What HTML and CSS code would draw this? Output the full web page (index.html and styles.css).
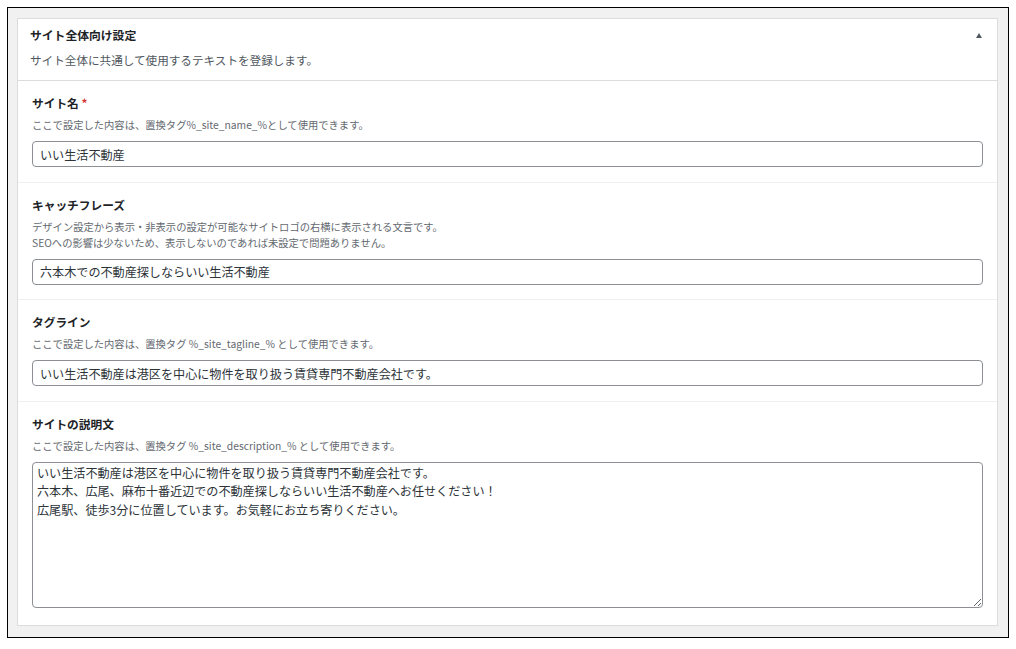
FILE: index.html
```html
<!DOCTYPE html>
<html lang="ja">
<head>
  <meta charset="UTF-8">
  <title>サイト全体向け設定</title>
  <link rel="stylesheet" href="styles.css">
</head>
<body>
  <div class="frame">
    <div class="postbox">
      <div class="postbox-header">
        <div class="title-row">
          <h2>サイト全体向け設定</h2>
          <span class="toggle"></span>
        </div>
        <p class="lead">サイト全体に共通して使用するテキストを登録します。</p>
      </div>

      <div class="field">
        <label class="field-label">サイト名 <span class="required">*</span></label>
        <p class="field-desc">ここで設定した内容は、置換タグ%_site_name_%として使用できます。</p>
        <input class="text-input" type="text" value="いい生活不動産">
      </div>

      <div class="field">
        <label class="field-label">キャッチフレーズ</label>
        <p class="field-desc">デザイン設定から表示・非表示の設定が可能なサイトロゴの右横に表示される文言です。<br>SEOへの影響は少ないため、表示しないのであれば未設定で問題ありません。</p>
        <input class="text-input" type="text" value="六本木での不動産探しならいい生活不動産">
      </div>

      <div class="field">
        <label class="field-label">タグライン</label>
        <p class="field-desc">ここで設定した内容は、置換タグ %_site_tagline_% として使用できます。</p>
        <input class="text-input" type="text" value="いい生活不動産は港区を中心に物件を取り扱う賃貸専門不動産会社です。">
      </div>

      <div class="field last">
        <label class="field-label">サイトの説明文</label>
        <p class="field-desc">ここで設定した内容は、置換タグ %_site_description_% として使用できます。</p>
        <textarea class="text-area">いい生活不動産は港区を中心に物件を取り扱う賃貸専門不動産会社です。
六本木、広尾、麻布十番近辺での不動産探しならいい生活不動産へお任せください！
広尾駅、徒歩3分に位置しています。お気軽にお立ち寄りください。</textarea>
      </div>
    </div>
  </div>
</body>
</html>
```

FILE: styles.css
```css
body {
  margin: 0;
  background: #fff;
  font-family: "Segoe UI", "Noto Sans CJK JP", "Noto Sans", sans-serif;
  color: #1d2327;
}

.frame {
  margin: 7px;
  border: 1px solid #000;
  background-color: #f1f1f1;
  padding: 10px 10px 10px 9px;
  box-sizing: border-box;
  height: 631px;
}

.postbox {
  background: #fff;
  border: 1px solid #dcdcde;
}

.postbox-header {
  padding: 8px 15px 12px 12px;
  border-bottom: 1px solid #dcdcde;
}

.title-row {
  display: flex;
  justify-content: space-between;
  align-items: center;
}

h2 {
  margin: 0;
  font-size: 11.8px;
  line-height: 16px;
  font-weight: bold;
}

.toggle {
  width: 0;
  height: 0;
  border-left: 3.5px solid transparent;
  border-right: 3.5px solid transparent;
  border-bottom: 5px solid #50575e;
}

.lead {
  margin: 9px 0 0;
  font-size: 11.6px;
  line-height: 16px;
  color: #50575e;
}

.field {
  padding: 14px 14px 14.5px 14px;
  border-bottom: 1px solid #f0f0f1;
}

.field.last {
  border-bottom: none;
  padding-bottom: 17px;
}

.field-label {
  display: block;
  font-size: 11.7px;
  line-height: 16px;
  font-weight: bold;
}

.required {
  color: #d63638;
}

.field-desc {
  margin: 6px 0 8px;
  font-size: 10.3px;
  line-height: 16px;
  color: #646970;
}

.text-input {
  display: block;
  width: 100%;
  box-sizing: border-box;
  height: 26px;
  padding: 0 7px;
  border: 1px solid #8c8f94;
  border-radius: 4px;
  font-family: inherit;
  font-size: 12.1px;
  color: #2c3338;
}

.text-area {
  display: block;
  width: 100%;
  box-sizing: border-box;
  height: 146px;
  padding: 1px 4px;
  border: 1px solid #8c8f94;
  border-radius: 4px;
  font-family: inherit;
  font-size: 12.1px;
  line-height: 18.5px;
  color: #2c3338;
  resize: vertical;
}
```
